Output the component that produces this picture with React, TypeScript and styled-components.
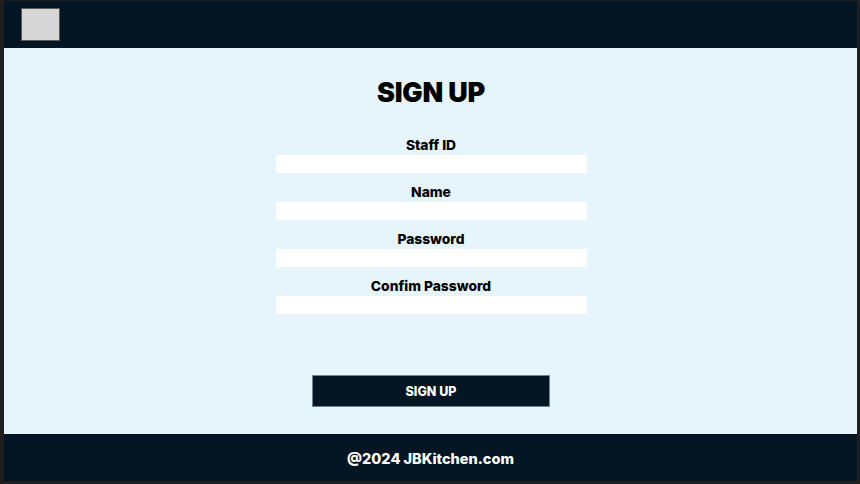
import React from "react";
import styled, { createGlobalStyle } from "styled-components";

const Global = createGlobalStyle`
  html, body { margin: 0; padding: 0; background: #1f1f1f; }
  body { font-family: Inter, "Noto Sans", sans-serif; }
  * { box-sizing: border-box; }
`;

const Frame = styled.div`
  width: 860px;
  height: 484px;
  padding: 1px 3px 3px 4px;
  background: #1f1f1f;
  display: flex;
`;

const Page = styled.div`
  flex: 1;
  display: flex;
  flex-direction: column;
  background: #e6f4fc;
`;

const Header = styled.header`
  flex-shrink: 0;
  height: 47px;
  background: #041624;
  display: flex;
  align-items: center;
  padding-left: 17px;
`;

const Logo = styled.div`
  width: 39px;
  height: 33px;
  background: #d6d6d6;
  border: 1px solid #5a5a5a;
  margin-top: -1px;
`;

const Main = styled.main`
  flex: 1;
  display: flex;
  flex-direction: column;
  align-items: center;
  padding-left: 1px;
`;

const Title = styled.h1`
  margin: 29px 0 0;
  font-size: 27px;
  font-weight: 900;
  letter-spacing: -0.2px;
  line-height: 32px;
  color: #000;
`;

const Form = styled.form`
  margin-top: 28px;
  display: flex;
  flex-direction: column;
  align-items: center;
`;

const Field = styled.div`
  display: flex;
  flex-direction: column;
  align-items: center;
  margin-bottom: 11px;
`;

const Label = styled.label`
  font-size: 13.8px;
  font-weight: 800;
  line-height: 17px;
  color: #000;
  margin-bottom: 1px;
`;

const Input = styled.input`
  width: 311px;
  height: 18px;
  border: none;
  background: #fff;
  outline: none;
  padding: 0 4px;
`;

const Button = styled.button`
  margin-top: 50px;
  width: 238px;
  height: 32px;
  padding-top: 2px;
  background: #041624;
  border: 1px solid #6f8595;
  color: #fff;
  font-family: Inter, "Noto Sans", sans-serif;
  font-size: 12.5px;
  font-weight: 800;
  cursor: pointer;
`;

const Footer = styled.footer`
  flex-shrink: 0;
  height: 47px;
  background: #041624;
  display: flex;
  align-items: center;
  justify-content: center;
  color: #fff;
  font-size: 14.5px;
  font-weight: 800;
  padding-top: 2px;
`;

const fields = ["Staff ID", "Name", "Password", "Confim Password"];

export default function App() {
  return (
    <>
      <Global />
      <Frame>
        <Page>
          <Header>
            <Logo />
          </Header>
          <Main>
            <Title>SIGN UP</Title>
            <Form onSubmit={(e) => e.preventDefault()}>
              {fields.map((f) => (
                <Field key={f}>
                  <Label>{f}</Label>
                  <Input type={f.includes("Password") ? "password" : "text"} />
                </Field>
              ))}
              <Button type="submit">SIGN UP</Button>
            </Form>
          </Main>
          <Footer>@2024 JBKitchen.com</Footer>
        </Page>
      </Frame>
    </>
  );
}
